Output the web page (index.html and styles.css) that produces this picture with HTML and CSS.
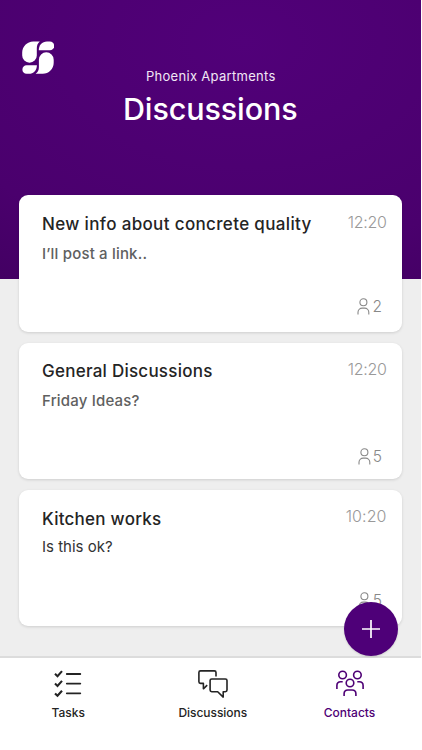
FILE: index.html
```html
<!DOCTYPE html>
<html lang="en">
<head>
<meta charset="utf-8">
<title>Discussions</title>
<link rel="stylesheet" href="styles.css">
</head>
<body>
<svg class="defs" width="0" height="0"><symbol id="person" viewBox="0 0 13 17"><g fill="none" stroke="currentColor" stroke-width="1.1"><circle cx="6.4" cy="4.3" r="3.5"/><path d="M1 16.5v-2.2a4.2 4.2 0 0 1 4.2-4.2h2.4a4.2 4.2 0 0 1 4.2 4.2v2.2"/></g></symbol></svg>
<div class="app">
  <header class="header">
    <svg class="logo" viewBox="0 0 32 33" fill="#fff"><path d="M17.4.4H11.2C5.2.4.2 5.4.2 11.6v2.8a7.3 7.3 0 0 0 14.6 0V7.4C14.8 4.4 15.6 2.2 17.8.4z"/><path d="M16.8 9.2C16.8 4.2 20 .4 25 .4h2.8a4.3 4.3 0 0 1 0 8.8z"/><path d="M16.9 18.7a7.3 7.3 0 0 1 14.8 0v3.1c0 6.1-4.9 11-11 11h-7.1c2.3-1.5 3.3-3.5 3.3-6.8z"/><path d="M.4 28.4a4.2 4.2 0 0 1 4.2-4.2h10.3c0 5.1-3.3 8.6-8.1 8.6H4.6a4.2 4.2 0 0 1-4.2-4.4z"/></svg>
    <p class="project"><span>Phoenix Apartments</span></p>
    <h1 class="title"><span>Discussions</span></h1>
  </header>
  <main class="list">
    <article class="card card-first">
      <div class="row"><h2 class="name n1">New info about concrete quality</h2><time class="time">12:20</time></div>
      <p class="message m1">I’ll post a link..</p>
      <div class="people"><svg class="person"><use href="#person"/></svg><span>2</span></div>
    </article>
    <article class="card card-second">
      <div class="row"><h2 class="name n2">General Discussions</h2><time class="time">12:20</time></div>
      <p class="message m2">Friday Ideas?</p>
      <div class="people"><svg class="person"><use href="#person"/></svg><span>5</span></div>
    </article>
    <article class="card card-third">
      <div class="row"><h2 class="name n3">Kitchen works</h2><time class="time">10:20</time></div>
      <p class="message m3">Is this ok?</p>
      <div class="people"><svg class="person"><use href="#person"/></svg><span>5</span></div>
    </article>
  </main>
  <nav class="nav">
    <a class="tab tasks"><svg width="28" height="28" viewBox="0 0 28 28" fill="none" stroke="currentColor"><path stroke-width="2.1" d="M1 3.8l2.5 2.4L8 1.1M1 13.6L3.5 16 8 10.9M1 23.4l2.5 2.4L8 20.7"/><path stroke-width="1.8" stroke-linecap="round" d="M12.8 4h13.5M12.8 13.6h13.5M12.8 23.3h13.5"/></svg><span>Tasks</span></a>
    <a class="tab talks"><svg width="30" height="28" viewBox="0 0 30 28" fill="none" stroke="currentColor" stroke-width="1.6" stroke-linejoin="round"><path d="M18 6.4V2.5Q18 .9 16.4.9H2.5Q.9.9.9 2.5v9.3q0 1.6 1.6 1.6h2.9v5.4l3.8-3.6"/><path d="M13.7 9h13.7Q29 9 29 10.6v9.5q0 1.6-1.6 1.6h-2.2v5.4l-5.5-5.4h-6q-1.6 0-1.6-1.6v-9.5Q12.1 9 13.7 9z"/></svg><span>Discussions</span></a>
    <a class="tab contacts"><svg width="28" height="28" viewBox="0 0 28 28" fill="none" stroke="currentColor" stroke-width="1.6"><circle cx="6.6" cy="5" r="3.8"/><circle cx="21.4" cy="5" r="3.8"/><circle cx="14" cy="13" r="3.8"/><path d="M.9 19v-3.5q0-3.8 3.8-3.8h2M27.1 19v-3.5q0-3.8-3.8-3.8h-2M8.1 26v-2.2q0-3.8 3.8-3.8h4.2q3.8 0 3.8 3.8V26"/></svg><span>Contacts</span></a>
  </nav>
  <button class="add" aria-label="Add"><svg width="20" height="20" viewBox="0 0 20 20" stroke="#fff" stroke-width="1.7"><path d="M10 1v18M1 10h18"/></svg></button>
</div>
</body>
</html>
```
FILE: styles.css
```css
* { box-sizing: border-box; }
body { margin: 0; background: #fff; font-family: Inter, "Liberation Sans", sans-serif; color: #242424; }
h1, h2, p { margin: 0; font-weight: 500; }
.defs { position: absolute; }
.app { position: relative; width: 420.5px; height: 750px; background: #eee; overflow: hidden; display: flex; flex-direction: column; }
.header { flex: none; height: 278.6px; background: radial-gradient(ellipse 110% 110% at 58% 15%, #510079, #4a006d 70%, #410060); color: #fff; text-align: center; }
.logo { display: block; width: 32px; height: 33px; margin: 40.5px 0 0 22.3px; }
.project { margin-top: -6.5px; font-size: 13px; line-height: 18px; font-weight: 400; color: #f1e8f5; letter-spacing: .3px; padding-left: 1px; }
.title { font-size: 30.5px; line-height: 36px; font-weight: 550; margin-top: 5.5px; letter-spacing: -.1px; }
.list { flex: none; margin-top: -84px; height: 461px; padding: 0 18.5px; position: relative; }
.card { background: #fff; border-radius: 9px; box-shadow: 0 1px 3px #0002; display: flex; flex-direction: column; padding: 18.5px 16px 0 23.5px; }
.card-first { height: 137px; }
.card-second { height: 136px; margin: 11px .5px 0; padding: 17.3px 15.5px 0 23px; }
.card-third { height: 136px; margin: 11px .5px 0; padding: 18.6px 15.5px 0 23px; }
.row { display: flex; justify-content: space-between; height: 22px; }
.name { font-size: 17px; line-height: 22px; white-space: nowrap; letter-spacing: .25px; }
.n1 { letter-spacing: .35px; }
.time { font-size: 16px; line-height: 19px; font-weight: 300; color: #999; letter-spacing: -.3px; margin-right: -.6px; }
.card-third .time { line-height: 17px; letter-spacing: .1px; }
.message { font-size: 15px; line-height: 20px; margin-top: 9px; color: #606060; letter-spacing: .18px; }
.m3 { font-weight: 400; color: #333; margin-top: 6.6px; letter-spacing: 0; }
.people { margin: auto 4px 14.5px auto; display: flex; align-items: center; gap: 2px; height: 21px; font-size: 15.5px; font-weight: 300; color: #888; }
.card-second .people { margin-bottom: 12px; }
.card-third .people { margin-bottom: 15px; }
.person { width: 13px; height: 17px; }
.nav { flex: 1; background: #fff; border-top: 2px solid #dcdcdc; display: flex; }
.tab { display: flex; flex-direction: column; align-items: center; padding-top: 12.5px; font-size: 12px; line-height: 16px; font-weight: 500; }
.tab svg { flex: none; margin-bottom: 7.2px; }
.tasks { width: 136.5px; }
.talks { width: 152.5px; }
.talks span { letter-spacing: -.05px; }
.contacts { width: 121px; color: #4e0075; }
.add { position: absolute; left: 344px; top: 602px; width: 54px; height: 54px; border: 0; border-radius: 50%; padding: 0; background: #4e0078; display: grid; place-items: center; box-shadow: 0 1px 2px #0002; }
```
